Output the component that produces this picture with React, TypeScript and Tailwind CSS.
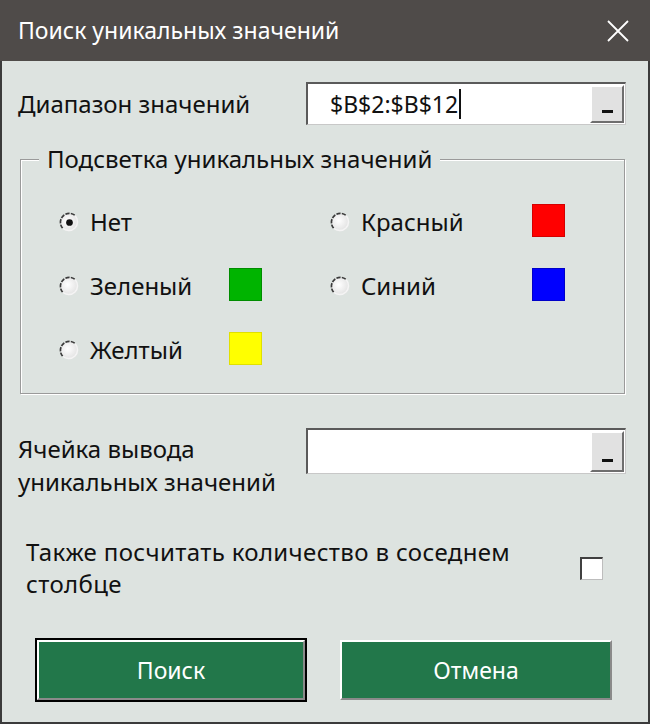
import React from "react";

const font = { fontFamily: '"Noto Sans", "Open Sans", sans-serif' };

function Radio({ checked }: { checked?: boolean }) {
  return (
    <svg width="21" height="21" viewBox="0 0 20 20" className="shrink-0">
      <defs>
        <radialGradient id="rg" cx="40%" cy="40%" r="60%">
          <stop offset="0%" stopColor="#ffffff" />
          <stop offset="100%" stopColor="#e2e2e2" />
        </radialGradient>
      </defs>
      <circle cx="10" cy="10" r="8.5" fill="url(#rg)" />
      <path d="M3.5 15.5 A8.5 8.5 0 0 1 15.5 3.5" fill="none" stroke="#3a3a3a" strokeWidth="1.6" strokeDasharray="4 1.2" />
      <path d="M15.5 3.5 A8.5 8.5 0 0 1 3.5 15.5" fill="none" stroke="#f4f4f4" strokeWidth="1.4" />
      {checked && <circle cx="10" cy="10" r="3.2" fill="#111" />}
    </svg>
  );
}

function DotButton() {
  return (
    <div className="w-[34px] self-stretch bg-[#e1e1e1] border-t-2 border-l-2 border-t-white border-l-white border-b-2 border-r-2 border-b-[#6e6e6e] border-r-[#6e6e6e] flex items-end justify-center pb-[8px]">
      <div className="w-[11px] h-[3px] bg-[#111]" />
    </div>
  );
}

function RefInput({ value }: { value?: string }) {
  return (
    <div className="flex w-[320px] bg-white border-t-2 border-l-2 border-t-[#5a5a5a] border-l-[#5a5a5a] border-b border-r border-b-[#c8c8c8] border-r-[#c8c8c8] pl-[22px] pr-[1px] py-[1px]">
      <div className="flex-1 flex items-center text-[23px] text-[#111]">
        {value && (
          <>
            <span>{value}</span>
            <span className="w-[1.5px] h-[30px] bg-[#111] ml-[1px]" />
          </>
        )}
      </div>
      <DotButton />
    </div>
  );
}

function Swatch({ color, border }: { color: string; border: string }) {
  return <div className="w-[33px] h-[33px] border shrink-0 -mt-[3px]" style={{ background: color, borderColor: border }} />;
}

function Option({
  label,
  width,
  checked,
  color,
  border,
}: {
  label: string;
  width: string;
  checked?: boolean;
  color?: string;
  border?: string;
}) {
  return (
    <div className="flex items-center h-[40px]">
      <Radio checked={checked} />
      <span className={`ml-[10px] text-[24px] text-[#111] ${width}`}>{label}</span>
      {color && border && <Swatch color={color} border={border} />}
    </div>
  );
}

export default function App() {
  return (
    <div className="w-[650px] h-[724px] flex flex-col" style={font}>
      <div className="h-[61px] bg-[#4f4b49] flex items-center justify-between pl-[18px] pr-[20px] shrink-0">
        <span className="text-white text-[23px]">Поиск уникальных значений</span>
        <svg width="24" height="24" viewBox="0 0 24 24">
          <path d="M2 2 L22 22 M22 2 L2 22" stroke="#ffffff" strokeWidth="1.8" fill="none" />
        </svg>
      </div>
      <div className="flex-1 bg-[#dde3e0] border-l-2 border-r-2 border-b-2 border-[#3b3b3b] flex flex-col pl-[16px] pr-[22px] pt-[21px]">
        <div className="flex items-stretch h-[43px]">
          <div className="w-[288px] flex items-center text-[24px] text-[#111]">Диапазон значений</div>
          <RefInput value="$B$2:$B$12" />
        </div>

        <div className="relative mt-[34px] ml-[2px] mr-[1px] h-[235px] border border-[#9a9a9a] shadow-[1px_1px_0_#ffffff,inset_1px_1px_0_#ffffff] pt-[42px] pl-[38px]">
          <div className="absolute -top-[18px] left-[18px] px-[8px] bg-[#dde3e0] text-[24px] text-[#111] leading-[34px]">
            Подсветка уникальных значений
          </div>
          <div className="grid grid-cols-[271px_1fr] gap-y-[24px]">
            <Option label="Нет" width="w-[139px]" checked />
            <Option label="Красный" width="w-[171px]" color="#ff0000" border="#d40000" />
            <Option label="Зеленый" width="w-[139px]" color="#00b400" border="#008c00" />
            <Option label="Синий" width="w-[171px]" color="#0000ff" border="#0000c8" />
            <Option label="Желтый" width="w-[139px]" color="#ffff00" border="#e0e000" />
          </div>
        </div>

        <div className="flex items-start mt-[34px]">
          <div className="w-[288px] text-[24px] text-[#111] leading-[33px] mt-[4px]">
            Ячейка вывода
            <br />
            уникальных значений
          </div>
          <div className="h-[46px] flex">
            <RefInput />
          </div>
        </div>

        <div className="flex items-center mt-[38px] pl-[8px]">
          <div className="w-[554px] text-[24px] text-[#111] leading-[32px] tracking-[0.35px]">
            Также посчитать количество в соседнем
            <br />
            столбце
          </div>
          <div className="w-[23px] h-[23px] bg-white border-t-2 border-l-2 border-t-[#404040] border-l-[#404040] border-b border-r border-b-[#bdbdbd] border-r-[#bdbdbd]" />
        </div>

        <div className="flex mt-[38px] pl-[17px] gap-[33px]">
          <button className="w-[272px] h-[64px] border-2 border-black p-0">
            <div className="w-full h-full bg-[#22774a] border-t-2 border-l-2 border-t-white border-l-white border-b-2 border-r-2 border-b-[#8a8a8a] border-r-[#8a8a8a] flex items-center justify-center text-white text-[23px]">
              Поиск
            </div>
          </button>
          <button className="w-[272px] h-[60px] mt-[2px] p-0">
            <div className="w-full h-full bg-[#22774a] border-t-2 border-l-2 border-t-white border-l-white border-b-2 border-r-2 border-b-[#8a8a8a] border-r-[#8a8a8a] flex items-center justify-center text-white text-[23px]">
              Отмена
            </div>
          </button>
        </div>
      </div>
    </div>
  );
}
